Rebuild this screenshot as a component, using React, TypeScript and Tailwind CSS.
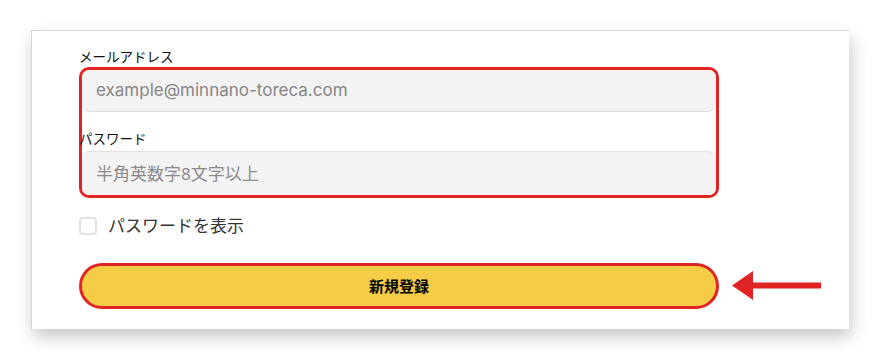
import React from "react";

export default function App() {
  return (
    <div className="w-[880px] h-[360px] bg-white overflow-hidden pt-[30px] pl-[31px]" style={{ fontFamily: '"Noto Sans", "Noto Sans CJK JP", sans-serif' }}>
      <div className="w-[818px] h-[299px] bg-white border-l border-t border-[#d3d6dd] shadow-[2px_8px_16px_rgba(0,0,0,0.22)] pl-[47px] pt-[16px]">
        <div className="h-[20px] text-[13.5px] leading-[20px] text-[#111]">メールアドレス</div>
        <div className="w-[640px] h-[131px] border-[3px] border-[#e02424] rounded-[10px] flex flex-col">
          <div className="h-[42px] bg-[#f3f3f3] border-b border-[#dcdcdc] rounded-[8px] flex items-center pl-[14px] text-[17px] text-[#858585]" style={{ fontFamily: '"Inter", "Noto Sans CJK JP", sans-serif' }}>
            example@minnano-toreca.com
          </div>
          <div className="mt-[17px] mb-[2px] h-[20px] text-[13.5px] leading-[20px] text-[#111] -ml-[3px]">パスワード</div>
          <div className="flex-1 bg-[#f3f3f3] border-t border-[#e2e2e2] rounded-t-[8px] rounded-b-[7px] flex items-center pl-[14px] text-[17px] text-[#8a8a8a]">
            半角英数字8文字以上
          </div>
        </div>
        <div className="mt-[18px] flex items-center h-[20px]">
          <div className="w-[18px] h-[18px] border-2 border-[#e3e3e3] rounded-[4px] bg-white" />
          <span className="ml-[11px] text-[17px] leading-[20px] text-[#333]">パスワードを表示</span>
        </div>
        <div className="mt-[27px] flex items-center">
          <button className="w-[640px] h-[46px] bg-[#f5cc45] border-[3px] border-[#e02424] rounded-full flex items-center justify-center text-[15px] font-bold text-black">
            新規登録
          </button>
          <svg width="89" height="30" viewBox="0 0 89 30" className="ml-[13px]">
            <polygon points="0,14.5 21,0 21,29" fill="#e02424" />
            <rect x="20" y="11.5" width="69" height="6" fill="#e02424" />
          </svg>
        </div>
      </div>
    </div>
  );
}
